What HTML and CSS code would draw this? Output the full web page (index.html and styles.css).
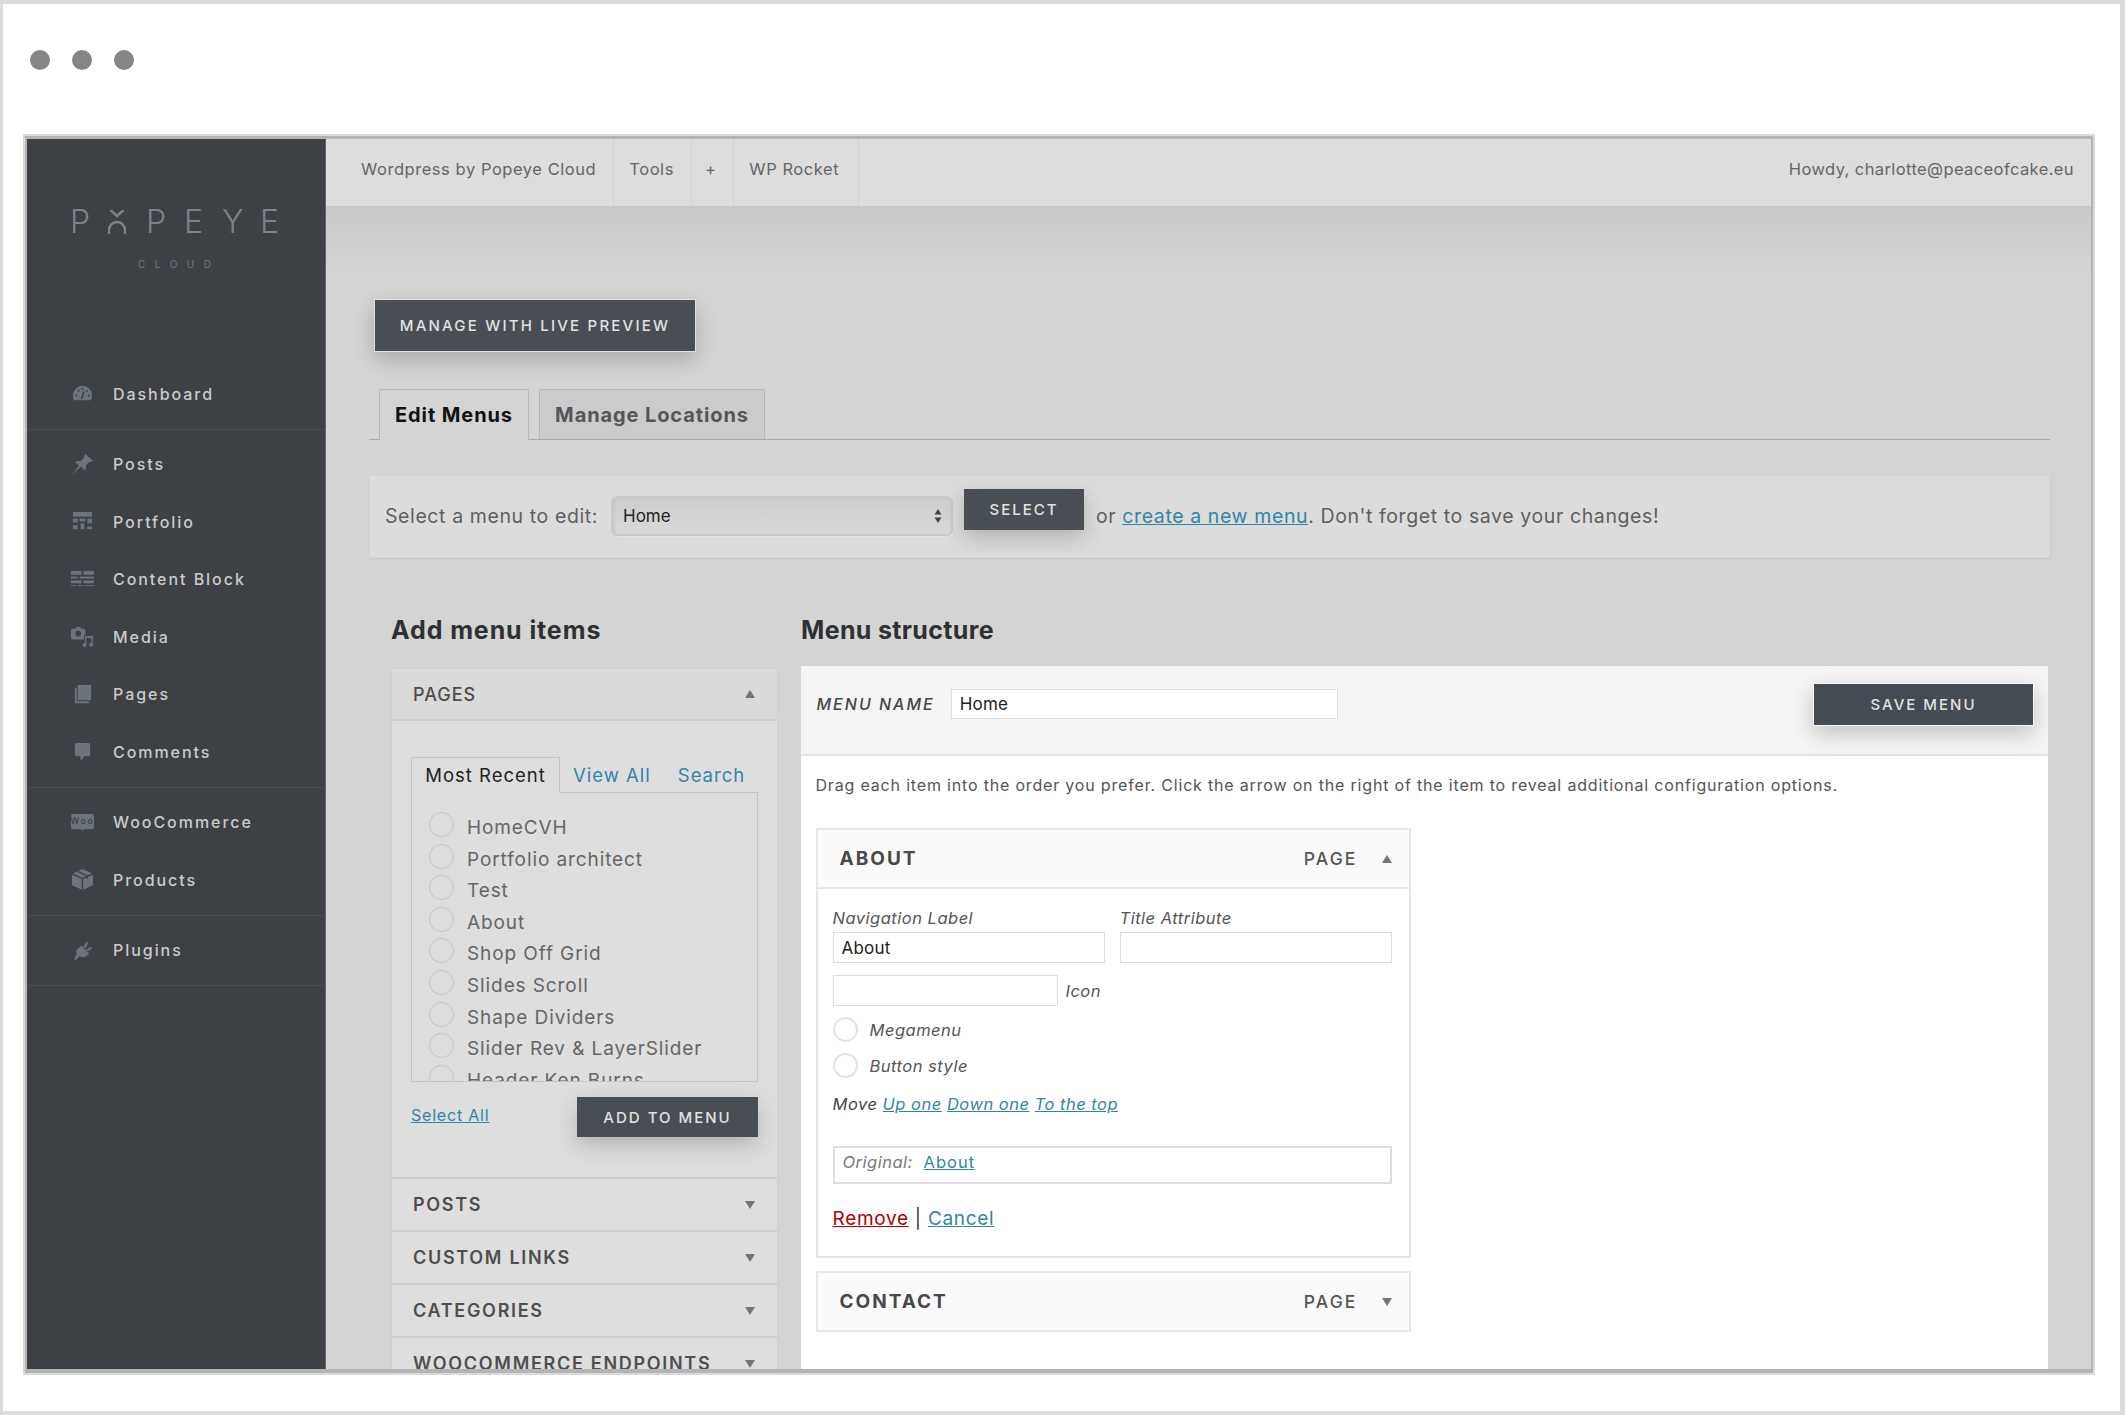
FILE: index.html
```html
<!DOCTYPE html>
<html>
<head>
  <meta charset="utf-8">
  <title>Menus - Popeye Cloud</title>
  <link rel="stylesheet" href="styles.css">
</head>
<body>
  <div class="frame">
    <div class="chrome">
      <span class="dot"></span>
      <span class="dot"></span>
      <span class="dot"></span>
    </div>
    <div class="window">
      <aside class="sidebar">
        <div class="logo">
          <div class="logo-word">
            <span>P</span>
            <svg class="logo-o" viewBox="0 0 18 24" width="18" height="24"><path d="M2.500 0l6.500 6 6.500-6" /><path d="M1 24v-4a8 8 0 0 1 16 0v4" /></svg>
            <span>P</span><span>E</span><span>Y</span><span>E</span>
          </div>
          <div class="logo-sub">CLOUD</div>
        </div>
        <div class="nav-group">
          <a class="nav-item">
            <svg viewBox="0 0 24 24"><path d="M12 4A10 10 0 0 0 2 14c0 1.800.4 3.500 1.300 5h17.400A10 10 0 0 0 22 14 10 10 0 0 0 12 4z"/><path class="cut" d="M11 18l2.500-8" /><circle class="dark" cx="5.500" cy="14" r="1"/><circle class="dark" cx="8" cy="9" r="1"/><circle class="dark" cx="18.500" cy="14" r="1"/><circle class="dark" cx="12" cy="7" r="1"/><circle class="dark" cx="16.500" cy="9.500" r="1"/></svg>
            Dashboard
          </a>
        </div>
        <div class="nav-group">
          <a class="nav-item">
            <svg viewBox="0 0 24 24"><path d="M15 1l8 7-2.500 1.500-1-.5-4 4c.5 2 0 4-1 5.500L10.500 14 1 23l7.500-10L4 9.500C6 8.500 8 8 10 8.500l4-4-.5-1z"/></svg>
            Posts
          </a>
          <a class="nav-item">
            <svg viewBox="0 0 24 24"><rect x="2" y="2" width="20" height="5"/><rect x="2" y="9" width="5" height="4"/><rect x="2" y="16" width="5" height="4"/><rect x="9" y="9" width="6" height="3"/><rect x="10" y="14" width="4" height="6"/><rect x="17" y="9" width="5" height="5"/><rect x="17" y="17" width="5" height="3"/></svg>
            Portfolio
          </a>
          <a class="nav-item">
            <svg viewBox="0 0 24 24"><rect x="0" y="3" width="11" height="4"/><rect x="13" y="3" width="11" height="4"/><rect x="0" y="9" width="7" height="2"/><rect x="9" y="9" width="15" height="2"/><rect x="0" y="13" width="11" height="3"/><rect x="13" y="13" width="11" height="3"/><rect x="0" y="18" width="5" height="1"/><rect x="7" y="18" width="5" height="1"/><rect x="14" y="18" width="10" height="1"/></svg>
            Content Block
          </a>
          <a class="nav-item">
            <svg viewBox="0 0 24 24"><path d="M2 4h2.500l1-2h4l1 2H13a2 2 0 0 1 2 2v7a2 2 0 0 1-2 2H2a2 2 0 0 1-2-2V6a2 2 0 0 1 2-2z"/><circle class="dark" cx="7.500" cy="9" r="3"/><path class="ring" d="M14 11h9.500v9.500a2.500 2.500 0 1 1-2.500-2.400V14h-4.500v7a2.500 2.500 0 1 1-2.500-2.400z"/></svg>
            Media
          </a>
          <a class="nav-item">
            <svg viewBox="0 0 24 24"><rect x="7" y="2" width="14" height="16"/><path d="M4 5h2v14h13v2H4z"/></svg>
            Pages
          </a>
          <a class="nav-item">
            <svg viewBox="0 0 24 24"><path d="M6 3h12a2 2 0 0 1 2 2v10a2 2 0 0 1-2 2h-4l-4 5v-5H6a2 2 0 0 1-2-2V5a2 2 0 0 1 2-2z"/></svg>
            Comments
          </a>
        </div>
        <div class="nav-group">
          <a class="nav-item">
            <svg viewBox="0 0 24 24"><path d="M2 3h20a2 2 0 0 1 2 2v12a2 2 0 0 1-2 2h-9l-1 2-1-2H2a2 2 0 0 1-2-2V5a2 2 0 0 1 2-2z"/><text class="woo-mark" x="12" y="13.500" text-anchor="middle">Woo</text></svg>
            WooCommerce
          </a>
          <a class="nav-item">
            <svg viewBox="0 0 24 24"><path d="M12 1l11 5v12l-11 5-11-5V6z"/><path class="seam" d="M1 6l11 5 11-5M12 11v12M7 3.500l10 4.700v3"/></svg>
            Products
          </a>
        </div>
        <div class="nav-group">
          <a class="nav-item">
            <svg viewBox="0 0 24 24"><path d="M11 7l8 8-3 3c-2 1.500-5 1.500-7 0l-4 4-2-1 3-5c-1-2-.5-4 .5-5.500z"/><path d="M13 8l3-5 2 1-3 6z"/><path d="M16 11l5-3 1 2-5 3z"/></svg>
            Plugins
          </a>
        </div>
      </aside>
      <div class="main">
        <div class="topbar">
          <a class="top-item first">Wordpress by Popeye Cloud</a>
          <a class="top-item">Tools</a>
          <a class="top-item plus">+</a>
          <a class="top-item rocket">WP Rocket</a>
          <span class="howdy">Howdy, charlotte@peaceofcake.eu</span>
        </div>
        <div class="content">
          <a class="btn btn-live">Manage with Live Preview</a>
          <div class="tabs">
            <a class="tab active">Edit Menus</a>
            <a class="tab">Manage Locations</a>
          </div>
          <div class="select-bar">
            <span class="select-label">Select a menu to edit:</span>
            <div class="select">
              <span>Home</span>
              <svg viewBox="0 0 8 14" width="8" height="14"><path d="M4 0l3.500 5.500h-7zM4 14L.5 8.500h7z"/></svg>
            </div>
            <a class="btn btn-select">Select</a>
            <span class="select-note">or <a class="link">create a new menu</a>. Don't forget to save your changes!</span>
          </div>
          <div class="columns">
            <div class="col-left">
              <h2>Add menu items</h2>
              <div class="accordion">
                <div class="acc-head open">Pages <i class="tri up"></i></div>
                <div class="acc-body">
                  <div class="pick-tabs">
                    <span class="pick-tab active">Most Recent</span>
                    <a class="pick-tab">View All</a>
                    <a class="pick-tab">Search</a>
                  </div>
                  <ul class="pick-list">
                    <li><input type="checkbox" class="radio">HomeCVH</li>
                    <li><input type="checkbox" class="radio">Portfolio architect</li>
                    <li><input type="checkbox" class="radio">Test</li>
                    <li><input type="checkbox" class="radio">About</li>
                    <li><input type="checkbox" class="radio">Shop Off Grid</li>
                    <li><input type="checkbox" class="radio">Slides Scroll</li>
                    <li><input type="checkbox" class="radio">Shape Dividers</li>
                    <li><input type="checkbox" class="radio">Slider Rev &amp; LayerSlider</li>
                    <li><input type="checkbox" class="radio">Header Ken Burns</li>
                  </ul>
                  <div class="pick-foot">
                    <a class="link select-all">Select All</a>
                    <a class="btn btn-add">Add to Menu</a>
                  </div>
                </div>
                <div class="acc-head">Posts <i class="tri"></i></div>
                <div class="acc-head">Custom Links <i class="tri"></i></div>
                <div class="acc-head">Categories <i class="tri"></i></div>
                <div class="acc-head">WooCommerce Endpoints <i class="tri"></i></div>
              </div>
            </div>
            <div class="col-right">
              <h2>Menu structure</h2>
              <div class="menu-panel">
                <div class="menu-head">
                  <label class="menu-name">Menu Name</label>
                  <input class="field name-field" value="Home">
                  <a class="btn btn-save">Save Menu</a>
                </div>
                <div class="menu-body">
                  <p class="hint">Drag each item into the order you prefer. Click the arrow on the right of the item to reveal additional configuration options.</p>
                  <div class="item">
                    <div class="item-head"><strong>About</strong><span>Page</span><i class="tri up dark-tri"></i></div>
                    <div class="item-body">
                      <div class="label-row">
                        <label>Navigation Label<input class="field" value="About"></label>
                        <label>Title Attribute<input class="field"></label>
                      </div>
                      <div class="icon-row"><input class="field icon-field"><em>Icon</em></div>
                      <div class="check-row"><input type="checkbox" class="radio white"><em>Megamenu</em></div>
                      <div class="check-row"><input type="checkbox" class="radio white"><em>Button style</em></div>
                      <div class="move-row">Move <a class="link">Up one</a> <a class="link">Down one</a> <a class="link">To the top</a></div>
                      <div class="original"><em>Original:</em> <a class="link">About</a></div>
                      <div class="actions"><a class="remove">Remove</a> | <a class="link">Cancel</a></div>
                    </div>
                  </div>
                  <div class="item">
                    <div class="item-head"><strong>Contact</strong><span>Page</span><i class="tri dark-tri"></i></div>
                  </div>
                </div>
              </div>
            </div>
          </div>
        </div>
      </div>
    </div>
  </div>
</body>
</html>
```
FILE: styles.css
```css
html,
body {
  margin: 0;
  padding: 0;
}
body {
  font-family: Inter, "Liberation Sans", sans-serif;
  color: #666;
  background: #fff;
}
a {
  cursor: pointer;
}
h2 {
  margin: 0;
  height: 32px;
  line-height: 32px;
  font-size: 25px;
  font-weight: 700;
  color: #2e3033;
}

.frame {
  box-sizing: border-box;
  width: 2125px;
  height: 1415px;
  overflow: hidden;
  background: #fff;
  border: solid #dcdcdc;
  border-width: 4px 5px 4px 3px;
}
.chrome {
  box-sizing: border-box;
  height: 132px;
  padding: 46px 0 0 27px;
  display: flex;
  gap: 22px;
}
.dot {
  width: 20px;
  height: 20px;
  border-radius: 50%;
  background: #858585;
}
.window {
  box-sizing: border-box;
  width: 2068px;
  height: 1237px;
  margin-left: 22px;
  display: flex;
  overflow: hidden;
  border: solid #b4b4b4;
  border-width: 3px 2px 4px 2px;
  box-shadow: 0 0 0 2px #dadada;
}

.sidebar {
  box-sizing: border-box;
  width: 299px;
  flex: none;
  background: #3d4045;
  border-right: 1px solid #62656a;
}
.logo {
  height: 220px;
  padding-top: 71px;
  box-sizing: border-box;
}
.logo-word {
  display: flex;
  align-items: center;
  height: 24px;
  padding-left: 43px;
  font-size: 32px;
  font-weight: 300;
  line-height: 24px;
  color: #7f8287;
}
.logo-word span {
  width: 38px;
}
.logo-o {
  width: 18px;
  margin-right: 20px;
  fill: none;
  stroke: #7f8287;
  stroke-width: 2.400;
}
.logo-sub {
  margin: 24px 0 0 111px;
  font-size: 10px;
  line-height: 12px;
  letter-spacing: 9.500px;
  color: #74777c;
}
.nav-group {
  padding: 6px 0;
  border-bottom: 1px solid #4a4d52;
}
.nav-item {
  height: 57.5px;
  display: flex;
  align-items: center;
  gap: 19px;
  padding-left: 44px;
  font-size: 16px;
  font-weight: 500;
  letter-spacing: 1.950px;
  color: #cbcbcb;
}
.nav-item svg {
  width: 23px;
  height: 23px;
  flex: none;
  fill: #6b747a;
}
.nav-item .cut,
.nav-item .seam {
  fill: none;
  stroke: #3d4045;
  stroke-width: 1.500;
}
.nav-item .ring {
  stroke: #3d4045;
  stroke-width: 1;
}
.nav-item .dark {
  fill: #3d4045;
}
.woo-mark {
  font-size: 9px;
  fill: #3d4045;
}

.main {
  flex: 1;
  min-width: 0;
  display: flex;
  flex-direction: column;
  background: #d4d4d4 linear-gradient(#c8c8c8, #d4d4d4 70px) 0 67px no-repeat;
}
.topbar {
  height: 67px;
  flex: none;
  display: flex;
  align-items: stretch;
  background: #ddd;
  font-size: 16.500px;
  letter-spacing: .55px;
  color: #666;
}
.top-item {
  display: flex;
  align-items: center;
  padding: 0 17px 8px 15px;
  border-right: 1px solid #d2d2d2;
}
.top-item.first {
  padding-left: 35px;
}
.top-item.plus {
  padding-left: 13px;
  padding-right: 17px;
}
.top-item.rocket {
  padding-right: 19px;
}
.howdy {
  margin-left: auto;
  padding: 0 17px 8px 0;
  align-self: center;
  letter-spacing: .4px;
}

.content {
  flex: 1;
  min-height: 0;
  display: flex;
  flex-direction: column;
  padding: 93px 41px 0 43px;
  overflow: hidden;
}
.btn {
  display: flex;
  align-items: center;
  justify-content: center;
  box-sizing: border-box;
  background: #494e55;
  color: #e2e2e2;
  font-size: 15px;
  font-weight: 500;
  letter-spacing: 2px;
  text-transform: uppercase;
  box-shadow: 0 8px 22px rgba(0,0,0,.2);
}
.btn-live {
  width: 322px;
  height: 53px;
  margin-left: 5px;
  flex: none;
  border: 1px solid #e0e0e0;
  letter-spacing: 2.200px;
}

.tabs {
  flex: none;
  display: flex;
  gap: 10px;
  height: 51px;
  margin-top: 37px;
  padding-left: 10px;
  box-sizing: border-box;
  border-bottom: 1px solid #a8a8a8;
}
.tab {
  box-sizing: border-box;
  height: 51px;
  display: flex;
  align-items: center;
  justify-content: center;
  border: 1px solid #b8b8b8;
  border-bottom: 0;
  background: #cbcbcb;
  font-size: 20px;
  font-weight: 700;
  letter-spacing: .9px;
  color: #54565a;
}
.tab:first-child {
  width: 150px;
}
.tab:last-child {
  width: 226px;
  height: 50px;
}
.tab.active {
  background: #d4d4d4;
  color: #111;
}

.select-bar {
  flex: none;
  box-sizing: border-box;
  height: 83px;
  margin-top: 35px;
  padding: 0 0 1px 15px;
  display: flex;
  align-items: center;
  background: #dcdcdc;
  border: 1px solid #d6d6d6;
  box-shadow: 0 1px 2px rgba(0,0,0,.06);
  font-size: 19.500px;
  letter-spacing: .6px;
  color: #5f5f5f;
}
.select {
  box-sizing: border-box;
  width: 342px;
  height: 40px;
  margin-left: 13px;
  padding: 0 9px 0 10px;
  display: flex;
  align-items: center;
  justify-content: space-between;
  border: 2px solid #c9c9c9;
  border-radius: 6px;
  background: linear-gradient(#cdcdcd, #d9d9d9);
  box-shadow: inset 2px 0 3px rgba(0,0,0,.05), 0 1px 0 #e4e4e4;
  font-size: 17px;
  letter-spacing: 0;
  color: #222;
}
.select svg {
  fill: #444;
}
.btn-select {
  width: 120px;
  height: 41px;
  margin: -13px 0 0 11px;
  flex: none;
}
.select-note {
  margin-left: 12px;
}
.link {
  color: #2f86a8;
  text-decoration: underline;
}

.columns {
  flex: 1;
  min-height: 0;
  display: flex;
  gap: 23px;
  margin: 56px 2px 0 22px;
}
.col-left {
  width: 387px;
  flex: none;
}
.col-left h2 {
  margin-bottom: 22px;
  letter-spacing: .9px;
}
.col-right {
  flex: 1;
  min-width: 0;
  display: flex;
  flex-direction: column;
}
.col-right h2 {
  margin-bottom: 20px;
  letter-spacing: .35px;
}

.accordion {
  box-sizing: border-box;
  background: #dedede;
  border-left: 1px solid #d0d0d0;
  border-right: 1px solid #d0d0d0;
  border-top: 1px solid #d0d0d0;
}
.acc-head {
  box-sizing: border-box;
  height: 53px;
  padding: 0 21px;
  display: flex;
  align-items: center;
  justify-content: space-between;
  border-top: 2px solid #cecece;
  font-size: 18px;
  font-weight: 600;
  letter-spacing: 1.700px;
  text-transform: uppercase;
  color: #4e4e4e;
}
.acc-head.open {
  height: 52px;
  border-top: 0;
  border-bottom: 2px solid #cecece;
  background: #dadada;
  font-weight: 500;
  letter-spacing: 1px;
}
.tri {
  width: 0;
  height: 0;
  margin-right: 1px;
  border-left: 5.500px solid transparent;
  border-right: 5.500px solid transparent;
  border-top: 8px solid #757575;
}
.tri.up {
  border-top: 0;
  border-bottom: 8px solid #757575;
}
.dark-tri {
  margin: 0;
}
.acc-body {
  height: 456px;
  box-sizing: border-box;
  padding: 36px 19px 0;
}
.pick-tabs {
  display: flex;
  height: 35px;
  font-size: 18.500px;
  letter-spacing: 1px;
  white-space: nowrap;
  align-items: stretch;
}
.pick-tab {
  display: flex;
  align-items: center;
  padding: 0 13px;
  margin-bottom: -1px;
  color: #2f86a8;
}
.pick-tab.active {
  box-sizing: border-box;
  width: 149px;
  flex: none;
  justify-content: center;
  padding: 0;
  position: relative;
  z-index: 1;
  border: 1px solid #c4c4c4;
  border-bottom-color: #dedede;
  color: #222;
}
.pick-tab + .pick-tab + .pick-tab {
  padding-left: 14px;
}
.pick-list {
  box-sizing: border-box;
  height: 290px;
  margin: 0;
  padding: 19px 0 0 17px;
  list-style: none;
  overflow: hidden;
  border: 1px solid #c4c4c4;
  font-size: 19px;
  letter-spacing: .9px;
  color: #666;
}
.pick-list li {
  height: 31.600px;
  display: flex;
  gap: 13px;
  line-height: 32px;
}
.radio {
  appearance: none;
  box-sizing: border-box;
  width: 25px;
  height: 25px;
  margin: 0;
  flex: none;
  border: 1px solid #c4c4c4;
  border-radius: 50%;
  background: transparent;
}
.pick-foot {
  display: flex;
  justify-content: space-between;
  align-items: flex-start;
  margin-top: 15px;
}
.select-all {
  margin-top: 8px;
  font-size: 16px;
  letter-spacing: .8px;
}
.btn-add {
  width: 181px;
  height: 40px;
}

.menu-panel {
  flex: 1;
  min-height: 0;
  background: #fff;
  overflow: hidden;
}
.menu-head {
  box-sizing: border-box;
  height: 90px;
  padding: 17px 14px 0 15.500px;
  display: flex;
  align-items: flex-start;
  background: #f4f4f4;
  border-bottom: 2px solid #e2e2e2;
}
.menu-name {
  margin-top: 11px;
  font-size: 16px;
  font-style: italic;
  font-weight: 500;
  letter-spacing: 2px;
  text-transform: uppercase;
  color: #444;
}
.field {
  box-sizing: border-box;
  height: 31px;
  padding: 0 8px;
  border: 1px solid #ddd;
  background: #fff;
  font: 17px Inter, "Liberation Sans", sans-serif;
  letter-spacing: .2px;
  color: #222;
  border-radius: 0;
  outline: 0;
}
.name-field {
  width: 387px;
  height: 30px;
  margin: 6px 0 0 16px;
}
.btn-save {
  width: 221px;
  height: 43px;
  margin-left: auto;
  border: 1px solid #f8f8f8;
  background: #454b52;
}
.menu-body {
  padding: 0 14.500px;
}
.hint {
  margin: 0;
  height: 72px;
  padding-top: 19px;
  box-sizing: border-box;
  font-size: 16px;
  line-height: 20px;
  letter-spacing: .82px;
  color: #555;
}
.item {
  width: 595px;
  box-sizing: border-box;
  margin-bottom: 13px;
  border: 2px solid #e6e6e6;
}
.item-head {
  box-sizing: border-box;
  height: 57px;
  padding: 0 17px 0 22px;
  display: flex;
  align-items: center;
  background: #fafafa;
  color: #555;
  text-transform: uppercase;
}
.item-head strong {
  margin-right: auto;
  font-size: 19px;
  font-weight: 700;
  letter-spacing: 2px;
  color: #484848;
}
.item-head span {
  margin-right: 24px;
  font-size: 17.500px;
  font-weight: 500;
  letter-spacing: 2.100px;
}
.item-body {
  box-sizing: border-box;
  height: 369px;
  padding: 19px 17px 0 15px;
  border-top: 2px solid #e6e6e6;
  font-style: italic;
  font-size: 16.500px;
  letter-spacing: .5px;
  color: #555;
}
.label-row {
  display: flex;
  gap: 15px;
}
.label-row label {
  display: block;
  line-height: 20px;
}
.label-row .field {
  display: block;
  width: 272px;
  margin-top: 4px;
  font-style: normal;
}
.icon-row {
  display: flex;
  align-items: center;
  gap: 8px;
  margin-top: 12px;
}
.icon-field {
  width: 225px;
}
.check-row {
  display: flex;
  align-items: center;
  gap: 12px;
  height: 25px;
  margin-top: 11px;
}
.check-row + .check-row {
  margin-top: 11px;
}
.radio.white {
  background: #fff;
  border: 2px solid #e2e2e2;
}
.move-row {
  margin-top: 15px;
  line-height: 22px;
  letter-spacing: .5px;
  color: #444;
}
.original {
  box-sizing: border-box;
  height: 38px;
  margin-top: 31px;
  padding: 2px 8px;
  line-height: 24px;
  border: 2px solid #ddd;
  font-style: normal;
  letter-spacing: 1px;
}
.original em {
  color: #777;
  letter-spacing: .5px;
  margin-right: 5px;
}
.actions {
  margin-top: 21px;
  font-style: normal;
  font-size: 19px;
  letter-spacing: .7px;
  line-height: 28px;
  color: #333;
}
.remove {
  color: #b00000;
  text-decoration: underline;
}
```
